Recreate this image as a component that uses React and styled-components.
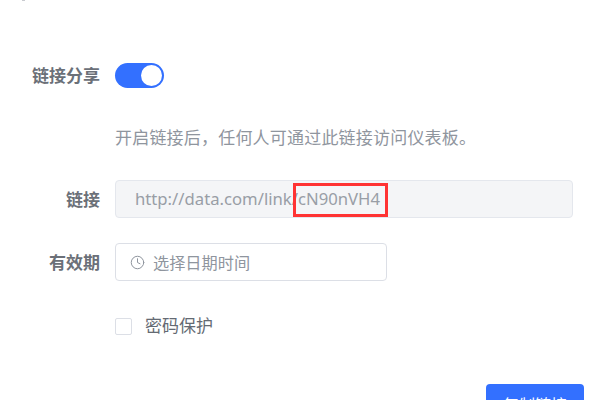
import React from "react";
import styled, { createGlobalStyle } from "styled-components";
import { Clock } from "lucide-react";

const GlobalStyle = createGlobalStyle`
    html, body {
        margin: 0;
        padding: 0;
        background: #ffffff;
    }
    body {
        font-family: "Noto Sans", "Noto Sans CJK SC", sans-serif;
    }
`;

const Page = styled.div`
    position: relative;
    width: 600px;
    height: 400px;
    overflow: hidden;
    display: flex;
    flex-direction: column;
    padding-top: 63px;
    box-sizing: border-box;
`;

const TopSpeck = styled.span`
    position: absolute;
    left: 22px;
    top: 0;
    width: 3px;
    height: 1px;
    background: #c9cbd0;
`;

const Row = styled.div`
    display: flex;
    align-items: center;
    height: ${(p) => p.$height}px;
    margin-bottom: ${(p) => p.$gap || 0}px;
`;

const Label = styled.label`
    width: 100px;
    margin-right: 15px;
    padding-bottom: 2px;
    text-align: right;
    font-size: 17px;
    font-weight: 600;
    color: #6b7078;
    flex-shrink: 0;
    white-space: nowrap;
`;

const Switch = styled.div`
    width: 49px;
    height: 25px;
    border-radius: 13px;
    background: #3370ff;
    display: flex;
    align-items: center;
    justify-content: flex-end;
    padding-right: 2px;
    box-sizing: border-box;
`;

const Knob = styled.span`
    width: 21px;
    height: 21px;
    border-radius: 50%;
    background: #ffffff;
`;

const Hint = styled.p`
    margin: 0 0 30px 115px;
    height: 24px;
    line-height: 24px;
    font-size: 17px;
    letter-spacing: 0.2px;
    color: #8f959e;
    white-space: nowrap;
`;

const LinkBox = styled.div`
    position: relative;
    width: 458px;
    height: 38px;
    box-sizing: border-box;
    display: flex;
    align-items: center;
    padding: 0 0 2px 19px;
    border: 1px solid #e4e7ed;
    border-radius: 4px;
    background: #f4f5f7;
    font-size: 16.7px;
    color: #999ea6;
`;

const Highlight = styled.span`
    position: absolute;
    left: 177px;
    top: 2px;
    width: 95px;
    height: 34px;
    box-sizing: border-box;
    border: 3px solid #ff3333;
`;

const DateBox = styled.div`
    width: 272px;
    height: 38px;
    box-sizing: border-box;
    display: flex;
    align-items: center;
    gap: 8px;
    padding-left: 14px;
    border: 1px solid #dcdfe6;
    border-radius: 4px;
    background: #ffffff;
    font-size: 16.2px;
    color: #8f959e;
`;

const Check = styled.span`
    width: 17px;
    height: 17px;
    box-sizing: border-box;
    margin-left: 115px;
    border: 1px solid #dcdfe6;
    border-radius: 2px;
`;

const CheckText = styled.span`
    margin-left: 13px;
    margin-bottom: 3px;
    font-size: 17px;
    color: #646a73;
`;

const Footer = styled.div`
    display: flex;
    justify-content: flex-end;
    padding-right: 16px;
`;

const Button = styled.button`
    flex-shrink: 0;
    width: 98px;
    height: 38px;
    padding-top: 3px;
    border: none;
    border-radius: 4px;
    background: #3370ff;
    color: #ffffff;
    font-family: inherit;
    font-size: 16px;
`;

export default function App() {
    return (
        <Page>
            <GlobalStyle />
            <TopSpeck />
            <Row $height={25} $gap={38}>
                <Label>链接分享</Label>
                <Switch>
                    <Knob />
                </Switch>
            </Row>
            <Hint>开启链接后，任何人可通过此链接访问仪表板。</Hint>
            <Row $height={38} $gap={25}>
                <Label>链接</Label>
                <LinkBox>
                    http://data.com/link/cN90nVH4
                    <Highlight />
                </LinkBox>
            </Row>
            <Row $height={38} $gap={35}>
                <Label>有效期</Label>
                <DateBox>
                    <Clock size={15} strokeWidth={1.6} color="#8f959e" />
                    选择日期时间
                </DateBox>
            </Row>
            <Row $height={20} $gap={48}>
                <Check />
                <CheckText>密码保护</CheckText>
            </Row>
            <Footer>
                <Button>复制链接</Button>
            </Footer>
        </Page>
    );
}
